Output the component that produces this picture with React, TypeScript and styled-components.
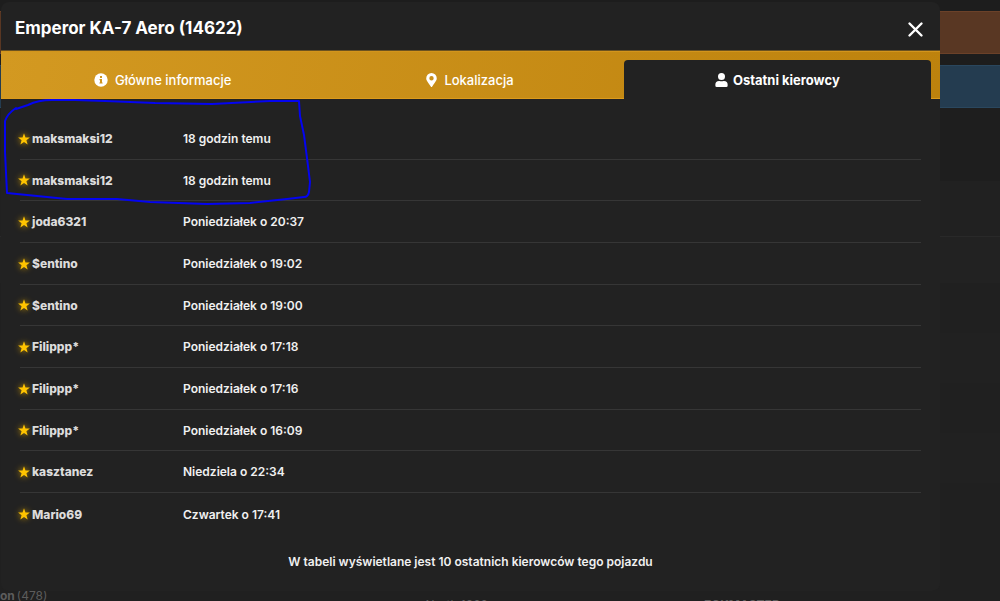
import React, { useState } from "react";
import styled, { createGlobalStyle } from "styled-components";

const GlobalStyle = createGlobalStyle`
  * { box-sizing: border-box; }
  body {
    margin: 0;
    background: #1d1d1d;
    color: #f0f0f0;
    font-family: Inter, "Liberation Sans", sans-serif;
    font-size: 12px;
  }
`;

const Page = styled.div`
  position: relative;
  height: 100vh;
  overflow: hidden;
`;

const Backdrop = styled.div`
  display: flex;
  flex-direction: column;
  height: 100%;
`;

const Notice = styled.div<{ $color: string; $edge: string }>`
  flex: none;
  height: 43px;
  margin-top: 11px;
  background: ${(p) => p.$color};
  border: solid ${(p) => p.$edge};
  border-width: 1px 0;
`;

const PageRow = styled.div<{ $height: number; $color: string; $line?: boolean }>`
  flex: none;
  height: ${(p) => p.$height}px;
  background: ${(p) => p.$color};
  border-bottom: ${(p) => (p.$line ? "1px solid #292929" : "0")};
`;

const PageFooter = styled.div`
  flex: 1;
  display: grid;
  grid-template-columns: 48px 1fr 1fr;
  align-items: start;
  overflow: hidden;
  background: #202020;
  color: #5c5c5c;
  line-height: 16px;
`;

const FooterName = styled.span`
  display: flex;
  justify-content: flex-start;
  gap: 2px;
  margin-top: 24px;
  font-size: 12px;
  white-space: nowrap;
`;

const FooterPlace = styled.span`
  margin-top: 33px;
  text-align: right;
  padding-right: 36px;
`;

const FooterTag = styled.span`
  margin-top: 33px;
  padding-left: 180px;
  font-weight: 700;
`;

const Modal = styled.section`
  position: absolute;
  top: 2px;
  left: 1px;
  right: 6%;
  background: #222222;
  border-radius: 8px;
`;

const ModalHeader = styled.header`
  display: flex;
  align-items: center;
  justify-content: space-between;
  height: 49px;
  padding: 4px 16px 0 14px;
  border-bottom: 1px solid #6b5220;
`;

const Title = styled.h2`
  margin: 0;
  color: #ffffff;
  font-size: 17px;
  font-weight: 700;
  line-height: 24px;
`;

const CloseButton = styled.button`
  display: flex;
  padding: 2px 0 0;
  border: 0;
  background: none;
  color: #ffffff;
  cursor: pointer;
`;

const Tabs = styled.div`
  display: grid;
  grid-template-columns: repeat(3, 1fr);
  height: 48px;
  padding: 9px 9px 0 8px;
  background: linear-gradient(100deg, #d39921, #bd820d);
  box-shadow: inset 0 1px #d3951c, inset 0 -1px #dc9b1c;
`;

const Tab = styled.button<{ $active: boolean }>`
  display: flex;
  align-items: center;
  justify-content: center;
  gap: ${(p) => (p.$active ? 5 : 7)}px;
  height: 39px;
  padding: 0;
  border: 0;
  border-radius: 4px 4px 0 0;
  background: ${(p) => (p.$active ? "#222222" : "transparent")};
  color: #ffffff;
  font-family: inherit;
  font-size: 13px;
  font-weight: ${(p) => (p.$active ? 700 : 500)};
  cursor: pointer;
`;

const Panel = styled.div`
  padding: 19px 19px 20px;
`;

const DriversTable = styled.table`
  width: 100%;
  border-collapse: separate;
  border-spacing: 0;
  table-layout: fixed;
`;

const DriverRow = styled.tr`
  height: 42px;

  &:nth-child(3n + 2) {
    height: 41px;
  }

  &:not(:last-child) > * {
    border-bottom: 1px solid #363636;
  }
`;

const DriverCell = styled.th`
  width: 163px;
  padding: 0;
  color: #dcdcdc;
  font-weight: 800;
  text-align: left;
`;

const TimeCell = styled.td`
  padding: 0;
  font-weight: 600;
`;

const Driver = styled.span`
  display: flex;
  align-items: center;
  gap: 2px;
`;

const StarIcon = styled.svg`
  flex: none;
  margin-left: -2px;
  filter: drop-shadow(0 0 3px #c99400);
`;

const Note = styled.p`
  margin: 18px 0 0;
  font-weight: 600;
  line-height: 18px;
  text-align: center;
`;

const Scribble = styled.svg`
  position: absolute;
  top: 95px;
  left: 0;
  pointer-events: none;
`;

const drivers = [
  ["maksmaksi12", "18 godzin temu"],
  ["maksmaksi12", "18 godzin temu"],
  ["joda6321", "Poniedziałek o 20:37"],
  ["$entino", "Poniedziałek o 19:02"],
  ["$entino", "Poniedziałek o 19:00"],
  ["Filippp*", "Poniedziałek o 17:18"],
  ["Filippp*", "Poniedziałek o 17:16"],
  ["Filippp*", "Poniedziałek o 16:09"],
  ["kasztanez", "Niedziela o 22:34"],
  ["Mario69", "Czwartek o 17:41"],
];

const InfoIcon = () => (
  <svg width="14" height="14" viewBox="0 0 14 14" aria-hidden="true">
    <circle cx="7" cy="7" r="6.7" fill="#fff" />
    <path d="M6 3h2v2H6zM5.5 6H8v3.4h.6v1.2H5.4V9.4H6V7.2h-.5z" fill="#cf951e" />
  </svg>
);

const PinIcon = () => (
  <svg width="11" height="14" viewBox="0 0 384 512" aria-hidden="true">
    <path
      fill="#fff"
      d="M172 502C27 291 0 270 0 192a192 192 0 0 1 384 0c0 78-27 99-172 310a24 24 0 0 1-40 0zM192 272a80 80 0 1 0 0-160 80 80 0 0 0 0 160z"
    />
  </svg>
);

const UserIcon = () => (
  <svg width="13" height="14" viewBox="0 0 448 512" aria-hidden="true">
    <path
      fill="#fff"
      d="M224 256a128 128 0 1 0 0-256 128 128 0 0 0 0 256zm90 32h-17a174 174 0 0 1-146 0h-17A134 134 0 0 0 0 422v42a48 48 0 0 0 48 48h352a48 48 0 0 0 48-48v-42a134 134 0 0 0-134-134z"
    />
  </svg>
);

const tabs = [
  { label: "Główne informacje", icon: <InfoIcon /> },
  { label: "Lokalizacja", icon: <PinIcon /> },
  { label: "Ostatni kierowcy", icon: <UserIcon /> },
];

export default function App() {
  const [active, setActive] = useState(2);
  return (
    <Page>
      <GlobalStyle />
      <Backdrop>
        <Notice $color="#593723" $edge="#6b4129" />
        <Notice $color="#243c50" $edge="#2a475e" />
        <PageRow $height={73} $color="#1e1e1e" />
        <PageRow $height={56} $color="#212121" $line />
        <PageRow $height={46} $color="#222222" />
        <PageRow $height={50} $color="#202020" />
        <PageRow $height={50} $color="#212121" />
        <PageRow $height={50} $color="#202020" />
        <PageRow $height={50} $color="#212121" />
        <PageRow $height={81} $color="#202020" />
        <PageFooter>
          <FooterName>
            <b>on</b>
            <span>(478)</span>
          </FooterName>
          <FooterPlace>North 1388</FooterPlace>
          <FooterTag>ECKMASTER</FooterTag>
        </PageFooter>
      </Backdrop>
      <Modal role="dialog" aria-labelledby="vehicle-title">
        <ModalHeader>
          <Title id="vehicle-title">Emperor KA-7 Aero (14622)</Title>
          <CloseButton type="button" aria-label="Zamknij">
            <svg width="17" height="17" viewBox="0 0 17 17" aria-hidden="true">
              <path
                d="M2.5 2.5l12 12M14.5 2.5l-12 12"
                stroke="currentColor"
                strokeWidth="2.4"
                strokeLinecap="round"
              />
            </svg>
          </CloseButton>
        </ModalHeader>
        <Tabs role="tablist">
          {tabs.map((tab, i) => (
            <Tab
              key={tab.label}
              type="button"
              role="tab"
              aria-selected={i === active}
              $active={i === active}
              onClick={() => setActive(i)}
            >
              {tab.icon}
              {tab.label}
            </Tab>
          ))}
        </Tabs>
        <Panel role="tabpanel">
          <DriversTable>
            <tbody>
              {drivers.map(([name, time], i) => (
                <DriverRow key={i}>
                  <DriverCell scope="row">
                    <Driver>
                      <StarIcon width="12" height="12" viewBox="0 0 22 22" aria-hidden="true">
                        <path
                          fill="#ffc400"
                          d="M11 0.5l2.7 7.6 8.1.2-6.4 4.9 2.3 7.8L11 16.4l-6.7 4.6 2.3-7.8L.2 8.3l8.1-.2z"
                        />
                      </StarIcon>
                      {name}
                    </Driver>
                  </DriverCell>
                  <TimeCell>{time}</TimeCell>
                </DriverRow>
              ))}
            </tbody>
          </DriversTable>
          <Note>W tabeli wyświetlane jest 10 ostatnich kierowców tego pojazdu</Note>
        </Panel>
      </Modal>
      <Scribble width="320" height="115" viewBox="0 0 320 115" fill="none" aria-hidden="true">
        <path
          d="M16 13C10 17 7 20 5 26V57L7 98L37 101L67 104H117L150 107L207 109L250 108L287 104L304 102Q308 102 309 97L310 87L307 63L304 40L300 21L299 6H270L212 9L155 8L105 6L75 5H52Q38 5 28 10L16 14"
          stroke="#0404f0"
          strokeWidth="2"
          strokeLinejoin="round"
          strokeLinecap="round"
        />
      </Scribble>
    </Page>
  );
}
